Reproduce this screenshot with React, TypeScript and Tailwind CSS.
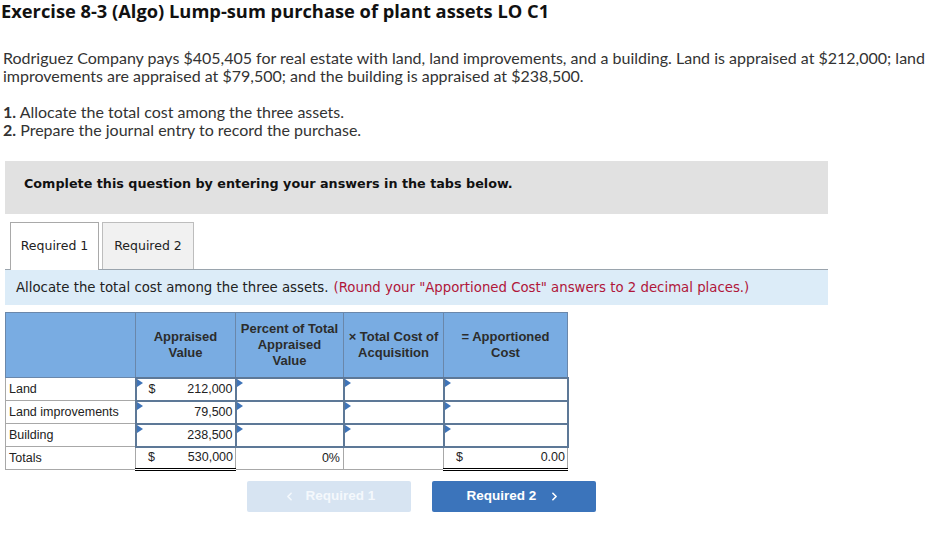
import React from "react";
import { ChevronLeft, ChevronRight } from "lucide-react";

const rows = [
  { label: "Land", dollar: true, value: "212,000" },
  { label: "Land improvements", dollar: false, value: "79,500" },
  { label: "Building", dollar: false, value: "238,500" },
];

function Flag() {
  return (
    <span className="absolute left-0 top-0 h-0 w-0 border-y-[4px] border-l-[6px] border-y-transparent border-l-[#3f74b8]" />
  );
}

function InputCell({ children }: { children?: React.ReactNode }) {
  return (
    <td className="relative h-[23px] border-2 border-[#5d7897] bg-white p-0">
      <Flag />
      {children}
    </td>
  );
}

function Money({ dollar, value }: { dollar: boolean; value: string }) {
  return (
    <div className="flex items-center justify-between pl-[12px] pr-[2px]">
      <span>{dollar ? "$" : ""}</span>
      <span>{value}</span>
    </div>
  );
}

export default function App() {
  return (
    <div className="w-[935px] h-[552px] overflow-hidden bg-white text-[#222]">
      {/* Heading and problem text */}
      <h1 className="whitespace-nowrap pl-[1px] text-[18.3px] leading-[22px] font-bold text-[#111] font-['Open_Sans',sans-serif]">
        Exercise 8-3 (Algo) Lump-sum purchase of plant assets LO C1
      </h1>
      <p className="mt-[27px] whitespace-nowrap pl-[3px] text-[16px] leading-[18px] text-[#333] font-['Lato',sans-serif]">
        Rodriguez Company pays $405,405 for real estate with land, land improvements, and a building. Land is appraised at $212,000; land
        <br />
        improvements are appraised at $79,500; and the building is appraised at $238,500.
      </p>
      <div className="mt-[18px] pl-[3px] text-[16px] leading-[18px] text-[#333] font-['Lato',sans-serif]">
        <div>
          <b>1.</b> Allocate the total cost among the three assets.
        </div>
        <div>
          <b>2.</b> Prepare the journal entry to record the purchase.
        </div>
      </div>

      {/* Instruction box */}
      <div className="ml-[5px] mt-[22px] flex h-[53px] w-[823px] items-center bg-[#e1e1e1] pb-[8px] pl-[19px] text-[12.75px] font-bold text-[#111] font-['DejaVu_Sans',sans-serif]">
        Complete this question by entering your answers in the tabs below.
      </div>

      {/* Tabs */}
      <div className="ml-[5px] mt-[8px] w-[823px] font-['DejaVu_Sans',sans-serif] text-[12.5px] text-[#222]">
        <div className="flex h-[48px] items-end gap-[3px] border-b border-[#9aa4ad] pl-[5px]">
          <div className="-mb-px flex h-[48px] w-[89px] items-center justify-center border border-b-0 border-[#a9a9a9] bg-white">
            Required 1
          </div>
          <div className="flex h-[47px] w-[92px] items-center justify-center border border-b-0 border-[#bdbdbd] bg-[#f1f1f1]">
            Required 2
          </div>
        </div>
        <div className="flex h-[35px] items-center bg-[#dcecf8] pl-[11px] text-[13.3px]">
          <span>Allocate the total cost among the three assets.</span>
          <span className="ml-[5px] text-[#b0163a]">
            (Round your "Apportioned Cost" answers to 2 decimal places.)
          </span>
        </div>
      </div>

      {/* Allocation table */}
      <table className="ml-[5px] mt-[7px] border-collapse font-['Liberation_Sans',sans-serif] text-[12.5px] text-[#222]">
        <colgroup>
          <col className="w-[130px]" />
          <col className="w-[100px]" />
          <col className="w-[108px]" />
          <col className="w-[100px]" />
          <col className="w-[124px]" />
        </colgroup>
        <thead>
          <tr className="h-[65px] bg-[#79ace2] text-[13px] font-bold leading-[16px] text-[#2c2c2c]">
            <th className="border border-[#6a87aa]"></th>
            <th className="border border-[#6a87aa] font-bold">
              Appraised
              <br />
              Value
            </th>
            <th className="border border-[#6a87aa] font-bold">
              Percent of Total
              <br />
              Appraised
              <br />
              Value
            </th>
            <th className="border border-[#6a87aa] font-bold">
              × Total Cost of
              <br />
              Acquisition
            </th>
            <th className="border border-[#6a87aa] font-bold">
              = Apportioned
              <br />
              Cost
            </th>
          </tr>
        </thead>
        <tbody>
          {rows.map((r) => (
            <tr key={r.label}>
              <td className="h-[23px] border border-[#a8a8a8] pl-[3px]">{r.label}</td>
              <InputCell>
                <Money dollar={r.dollar} value={r.value} />
              </InputCell>
              <InputCell />
              <InputCell />
              <InputCell />
            </tr>
          ))}
          <tr>
            <td className="h-[23px] border border-[#a8a8a8] pl-[3px]">Totals</td>
            <td className="border border-[#a8a8a8] border-t-black border-b-[3px] border-b-black border-double">
              <Money dollar value="530,000" />
            </td>
            <td className="border border-[#a8a8a8] pr-[3px] text-right">0%</td>
            <td className="border border-[#a8a8a8]"></td>
            <td className="border border-[#a8a8a8] border-t-black border-b-[3px] border-b-black border-double">
              <Money dollar value="0.00" />
            </td>
          </tr>
        </tbody>
      </table>

      {/* Navigation buttons */}
      <div className="ml-[247px] mt-[10px] flex gap-[21px] font-['Liberation_Sans',sans-serif] text-[13.5px] font-bold">
        <button className="flex h-[31px] w-[164px] items-center justify-center gap-[10px] rounded-[2px] bg-[#d7e4f2] text-[#f4f8fc]">
          <ChevronLeft size={13} strokeWidth={3} />
          <span>Required 1</span>
        </button>
        <button className="flex h-[31px] w-[164px] items-center justify-center gap-[12px] rounded-[2px] bg-[#3b74bb] text-white">
          <span>Required 2</span>
          <ChevronRight size={13} strokeWidth={3} />
        </button>
      </div>
    </div>
  );
}
